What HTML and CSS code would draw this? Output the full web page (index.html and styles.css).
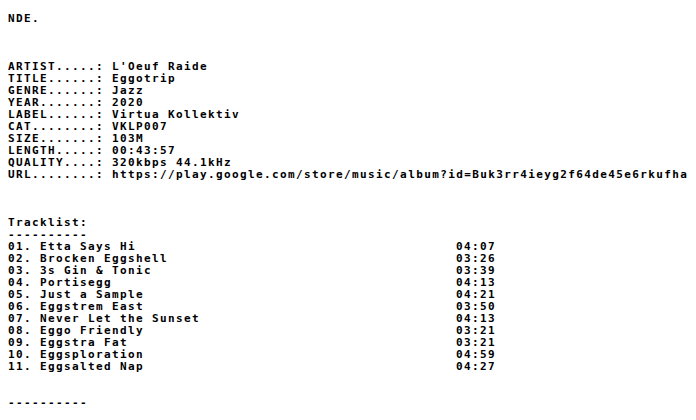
FILE: index.html
```html
<!DOCTYPE html>
<html lang="en">
<head>
<meta charset="utf-8">
<title>NFO</title>
<link rel="stylesheet" href="styles.css">
</head>
<body>
<main class="nfo">
<pre class="text">NDE.



ARTIST.....: L'Oeuf Raide
TITLE......: Eggotrip
GENRE......: Jazz
YEAR.......: 2020
LABEL......: Virtua Kollektiv
CAT........: VKLP007
SIZE.......: 103M
LENGTH.....: 00:43:57
QUALITY....: 320kbps 44.1kHz
URL........: https://play.google.com/store/music/album?id=Buk3rr4ieyg2f64de45e6rkufha



Tracklist:
----------</pre>
<ol class="tracks">
<li><span class="title">01. Etta Says Hi</span><span class="time">04:07</span></li>
<li><span class="title">02. Brocken Eggshell</span><span class="time">03:26</span></li>
<li><span class="title">03. 3s Gin &amp; Tonic</span><span class="time">03:39</span></li>
<li><span class="title">04. Portisegg</span><span class="time">04:13</span></li>
<li><span class="title">05. Just a Sample</span><span class="time">04:21</span></li>
<li><span class="title">06. Eggstrem East</span><span class="time">03:50</span></li>
<li><span class="title">07. Never Let the Sunset</span><span class="time">04:13</span></li>
<li><span class="title">08. Eggo Friendly</span><span class="time">03:21</span></li>
<li><span class="title">09. Eggstra Fat</span><span class="time">03:21</span></li>
<li><span class="title">10. Eggsploration</span><span class="time">04:59</span></li>
<li><span class="title">11. Eggsalted Nap</span><span class="time">04:27</span></li>
</ol>
<pre class="text">


----------</pre>
</main>
</body>
</html>
```
FILE: styles.css
```css
html, body {
  margin: 0;
  background: #ffffff;
  overflow: hidden;
}
.nfo {
  padding: 13px 8px 0 8px;
  font-family: "DejaVu Sans Mono", monospace;
  font-weight: bold;
  font-size: 11px;
  letter-spacing: 1.38px;
  line-height: 12px;
  color: #000000;
}
.text {
  margin: 0;
  font: inherit;
  white-space: pre;
}
.tracks {
  list-style: none;
  margin: 0;
  padding: 0;
}
.tracks li {
  display: grid;
  grid-template-columns: 448px auto;
  white-space: pre;
}
```
